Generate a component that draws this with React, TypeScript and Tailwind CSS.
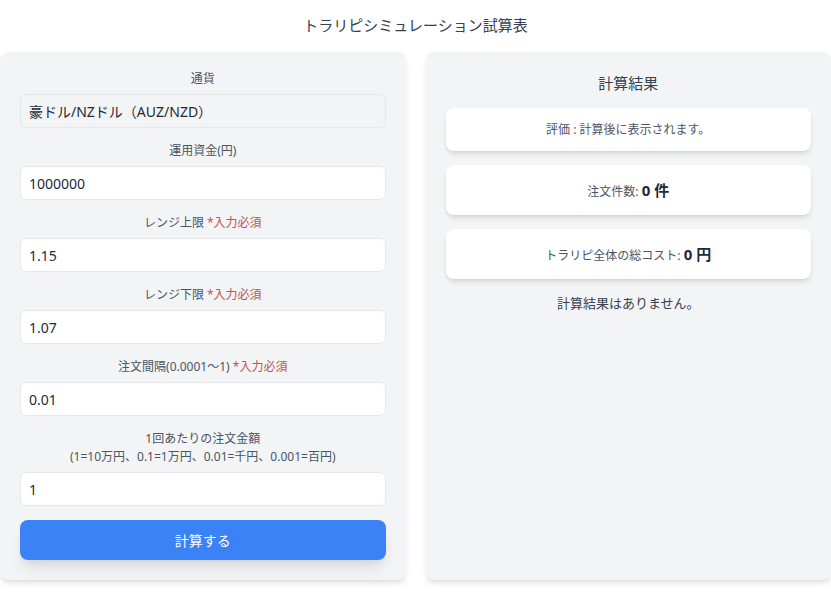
import React from 'react';

const font = { fontFamily: '"Noto Sans", "Noto Sans CJK JP", sans-serif' };

type FieldProps = {
    label: React.ReactNode;
    value: string;
    disabled?: boolean;
};

const Required = () => <span className="text-[#c9504b]"> *入力必須</span>;

const Field = ({ label, value, disabled }: FieldProps) => {
    return (
        <div className="flex flex-col">
            <label className="text-[12px] leading-[18px] text-[#4b5563] text-center mb-[6px]">{label}</label>
            <input
                type="text"
                defaultValue={value}
                disabled={disabled}
                className={
                    disabled
                        ? 'h-[34px] px-2 text-[14px] text-[#1f2937] bg-[#f3f4f6] border border-[#e5e7eb] rounded-md outline-none'
                        : 'h-[34px] px-2 text-[14px] text-[#1f2937] bg-white border border-[#e5e7eb] rounded-md outline-none'
                }
            />
        </div>
    );
};

const ResultCard = ({ children, tall }: { children: React.ReactNode; tall?: boolean }) => (
    <div
        className={
            tall
                ? 'bg-white rounded-lg shadow-md h-[50px] flex items-center justify-center text-[12px] text-[#4b5563]'
                : 'bg-white rounded-lg shadow-md h-[43px] flex items-center justify-center text-[12px] text-[#4b5563]'
        }
    >
        <p>{children}</p>
    </div>
);

const App = () => {
    return (
        <div className="bg-white min-h-screen w-[831px]" style={font}>
            <h1 className="text-center text-[15px] leading-[22px] text-[#374151] pt-[14px] pb-[16px]">
                トラリピシミュレーション試算表
            </h1>
            <div className="flex gap-5">
                {/* input form */}
                <div className="flex-1 bg-[#f3f4f6] rounded-lg shadow-md px-5 pt-[18px] pb-5 flex flex-col gap-[14px]">
                    <Field label="通貨" value="豪ドル/NZドル（AUZ/NZD）" disabled />
                    <Field label="運用資金(円)" value="1000000" />
                    <Field label={<>レンジ上限<Required /></>} value="1.15" />
                    <Field label={<>レンジ下限<Required /></>} value="1.07" />
                    <Field label={<>注文間隔(0.0001～1)<Required /></>} value="0.01" />
                    <Field
                        label={
                            <>
                                1回あたりの注文金額
                                <br />
                                (1=10万円、0.1=1万円、0.01=千円、0.001=百円)
                            </>
                        }
                        value="1"
                    />
                    <button className="h-10 rounded-lg bg-[#3b82f6] text-white text-[14px] shadow-lg">計算する</button>
                </div>

                {/* results */}
                <div className="flex-1 bg-[#f3f4f6] rounded-lg shadow-md px-5 pt-5 pb-5 flex flex-col gap-[14px]">
                    <h2 className="text-center text-[15px] leading-[22px] text-[#374151]">計算結果</h2>
                    <ResultCard>評価 : 計算後に表示されます。</ResultCard>
                    <ResultCard tall>
                        注文件数: <span className="text-[15px] font-bold text-[#1f2937]">0 件</span>
                    </ResultCard>
                    <ResultCard tall>
                        トラリピ全体の総コスト: <span className="text-[15px] font-bold text-[#1f2937]">0 円</span>
                    </ResultCard>
                    <p className="text-center text-[13px] leading-[20px] text-[#374151]">計算結果はありません。</p>
                </div>
            </div>
        </div>
    );
};

export default App;
